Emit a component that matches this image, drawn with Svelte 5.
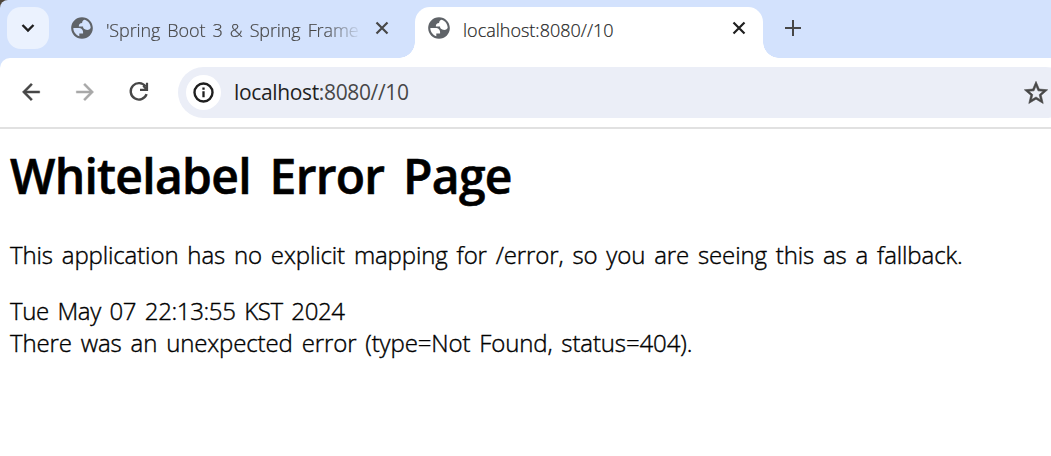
<script>
    const tabs = [
        { title: "'Spring Boot 3 & Spring Frame", active: false },
        { title: "localhost:8080//10", active: true }
    ];

    const url = { host: "localhost", rest: ":8080//10" };
</script>

<div class="window">
    <header class="tab_strip">
        <button class="search_tabs" aria-label="Search tabs">
            <svg width="14" height="10" viewBox="0 0 14 10"><path d="M1.5 2 7 7.5 12.5 2" fill="none" stroke="#1f1f1f" stroke-width="2.4" /></svg>
        </button>

        {#each tabs as tab}
            <div class="tab" class:active={tab.active}>
                <svg class="globe" width="26" height="26" viewBox="0 0 24 24">
                    <path fill="#5f6368" d="M12 2C6.48 2 2 6.48 2 12s4.48 10 10 10 10-4.48 10-10S17.52 2 12 2zM4 12h4.4c3.4.02 4.93 1.73 4.6 5.13H9.51v2.48C6.3 18.5 4 15.5 4 12zm16 0c-.77 1.17-1.7 1.84-3.13 1.84-2.76 0-4.13-1.54-3.9-3.13H9.06c0-2.2 1-3.34 3.03-3.34 0-1.83 1.2-2.7 2.4-2.97C17.7 5.5 20 8.4 20 12z" />
                </svg>
                <span class="title">{tab.title}</span>
                <svg class="close" width="14" height="14" viewBox="0 0 14 14"><path d="M1.5 1.5l11 11M12.5 1.5l-11 11" fill="none" stroke="currentColor" stroke-width="2.2" /></svg>
            </div>
        {/each}

        <svg class="new_tab" width="16" height="16" viewBox="0 0 16 16"><path d="M8 0v16M0 8h16" stroke="#474747" stroke-width="2" /></svg>
    </header>

    <nav class="toolbar">
        <svg class="nav_icon" width="26" height="26" viewBox="0 0 24 24"><path fill="#474747" stroke="#474747" stroke-width=".4" d="M20 11H7.83l5.59-5.59L12 4l-8 8 8 8 1.41-1.41L7.83 13H20v-2z" /></svg>
        <svg class="nav_icon" width="26" height="26" viewBox="0 0 24 24"><path fill="#a8a8a8" stroke="#a8a8a8" stroke-width=".4" d="M12 4l-1.41 1.41L16.17 11H4v2h12.17l-5.58 5.59L12 20l8-8z" /></svg>
        <svg class="nav_icon" width="26" height="26" viewBox="0 0 26 26">
            <path d="M19.6 7.6A8.2 8.2 0 1 0 20.6 15.2" fill="none" stroke="#474747" stroke-width="2.4" />
            <path d="M21 3.8v7h-7M20.6 10.2l-3.4-3.4" fill="none" stroke="#474747" stroke-width="2.2" />
        </svg>

        <div class="omnibox">
            <span class="info">
                <svg width="21" height="21" viewBox="0 0 21 21">
                    <circle cx="10.5" cy="10.5" r="9" fill="none" stroke="#1f1f1f" stroke-width="2.4" />
                    <path d="M10.5 9.3v6M10.5 5.5v2.2" stroke="#1f1f1f" stroke-width="2.3" />
                </svg>
            </span>
            <span class="url"><b>{url.host}</b>{url.rest}</span>
            <svg class="star" width="28" height="28" viewBox="0 0 24 24"><path fill="#474747" stroke="#474747" stroke-width=".5" d="M22 9.24l-7.19-.62L12 2 9.19 8.63 2 9.24l5.46 4.73L5.82 21 12 17.27 18.18 21l-1.63-7.03L22 9.24zM12 15.4l-3.76 2.27 1-4.28-3.32-2.88 4.38-.38L12 6.1l1.71 4.04 4.38.38-3.32 2.88 1 4.28L12 15.4z" /></svg>
        </div>
    </nav>

    <main>
        <h1>Whitelabel Error Page</h1>
        <p class="mapping">This application has no explicit mapping for /error, so you are seeing this as a fallback.</p>
        <div class="created">Tue May 07 22:13:55 KST 2024</div>
        <div class="reason">There was an unexpected error (type=Not Found, status=404).</div>
    </main>
</div>

<style>
    :global(body) {
        margin: 0;
        background: #4d453b;
    }

    .window {
        width: 1051px;
        height: 456px;
        display: flex;
        flex-direction: column;
        overflow: hidden;
        border-top-left-radius: 8px;
        background: #d3e2fd;
        font-family: "Open Sans", "Noto Sans", sans-serif;
    }

    svg {
        display: block;
        flex: none;
    }

    .tab_strip {
        height: 58px;
        flex: none;
        display: flex;
        align-items: flex-start;
        padding-left: 7px;
        box-sizing: border-box;
    }

    .search_tabs {
        width: 42px;
        height: 42px;
        margin: 7px 0 0;
        padding: 0;
        border: 0;
        border-radius: 14px;
        display: grid;
        place-items: center;
        background: #ebf2fe;
    }

    .tab {
        position: relative;
        width: 348px;
        height: 51px;
        margin-top: 7px;
        padding: 0 17px 9px 11px;
        box-sizing: border-box;
        display: flex;
        align-items: center;
        color: #474747;
    }

    .tab:not(.active) {
        width: 358px;
        padding-left: 20px;
        padding-right: 18px;
        margin-right: 8px;
    }

    .tab.active {
        background: #fff;
        border-radius: 15px 15px 0 0;
        color: #1f1f1f;
    }

    /* flared feet where the active tab meets the toolbar */
    .tab.active::before,
    .tab.active::after {
        content: "";
        position: absolute;
        bottom: 0;
        width: 16px;
        height: 16px;
    }

    .tab.active::before {
        left: -16px;
        background: radial-gradient(circle at 0 0, transparent 15.5px, #fff 16px);
    }

    .tab.active::after {
        right: -16px;
        background: radial-gradient(circle at 100% 0, transparent 15.5px, #fff 16px);
    }

    .title {
        width: 254px;
        margin: 4px 0 0 11px;
        overflow: hidden;
        white-space: nowrap;
        font-size: 18px;
        font-weight: 300;
        line-height: 24px;
        -webkit-text-stroke: 0.2px currentColor;
    }

    .tab:not(.active) .title {
        word-spacing: 2.6px;
        letter-spacing: -0.12px;
        -webkit-mask-image: linear-gradient(to right, #000 218px, transparent 256px);
        mask-image: linear-gradient(to right, #000 218px, transparent 256px);
    }

    .close {
        margin-left: auto;
    }

    .new_tab {
        margin: 20px 0 0 22px;
    }

    .toolbar {
        height: 71px;
        flex: none;
        display: flex;
        align-items: center;
        padding: 0 0 1px 18px;
        gap: 28px;
        box-sizing: border-box;
        border-bottom: 2px solid #e1e1e1;
        border-top-left-radius: 10px;
        background: #fff;
    }

    .omnibox {
        width: 893px;
        height: 51px;
        flex: none;
        margin: 1px 0 0 -2px;
        padding: 0 21px 0 8px;
        box-sizing: border-box;
        display: flex;
        align-items: center;
        border-radius: 26px;
        background: #ebeef7;
    }

    .info {
        width: 35px;
        height: 35px;
        flex: none;
        display: grid;
        place-items: center;
        border-radius: 50%;
        background: #fff;
    }

    .url {
        margin: -2px 0 0 13px;
        font-size: 21px;
        font-weight: 400;
        letter-spacing: -0.35px;
        color: #474747;
    }

    .url b {
        font-weight: inherit;
        color: #1f1f1f;
    }

    .star {
        margin-left: auto;
    }

    main {
        flex: 1;
        padding: 15px 10px 0;
        background: #fff;
        color: #000;
    }

    h1 {
        margin: 0;
        font-size: 48px;
        font-weight: 600;
        line-height: 64px;
        letter-spacing: -0.72px;
        word-spacing: 7px;
        white-space: nowrap;
        -webkit-text-stroke: 0.6px #000;
    }

    p {
        margin: 31px 0 24px;
    }

    p,
    .created,
    .reason {
        font-size: 24px;
        font-weight: 300;
        line-height: 32px;
        letter-spacing: -0.12px;
        word-spacing: 2.8px;
        white-space: nowrap;
        -webkit-text-stroke: 0.4px #000;
    }

    .created {
        letter-spacing: -0.37px;
    }
</style>
